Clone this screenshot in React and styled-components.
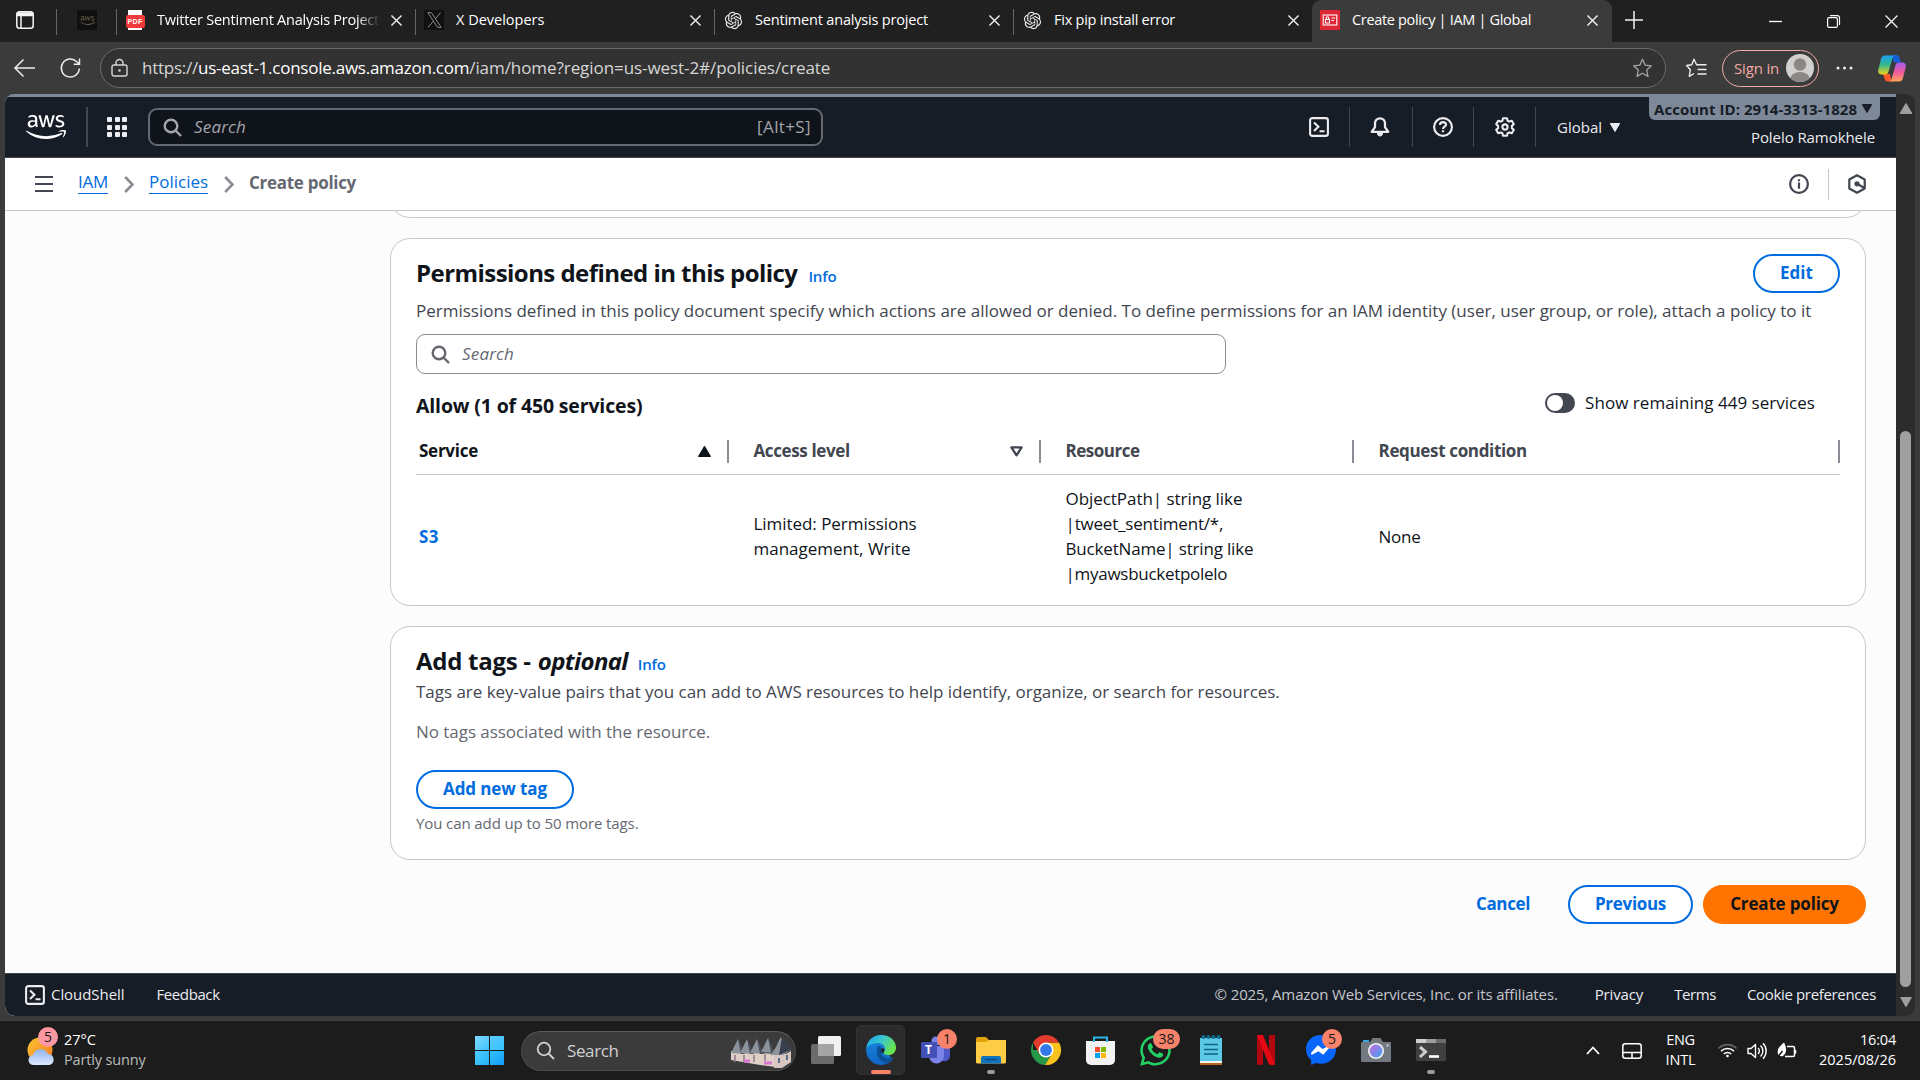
import React from 'react';
import styled, { createGlobalStyle, css } from 'styled-components';
import { FaAws, FaWhatsapp } from 'react-icons/fa';
import { RiOpenaiFill } from 'react-icons/ri';

const Global = createGlobalStyle`
  * { box-sizing: border-box; }
  html, body { margin: 0; padding: 0; }
  body { font-family: "Open Sans", "Noto Sans", sans-serif; overflow: hidden; background: #3b3b3b; }
  svg { display: block; flex: none; overflow: visible; }
`;

const Screen = styled.div`
  width: 1920px;
  height: 1080px;
  display: flex;
  flex-direction: column;
  background: #3b3b3b;
  overflow: hidden;
`;

const Txt = styled.span`
  white-space: nowrap;
  letter-spacing: ${(p) => p.$ls || 0}px;
`;

/* ---------- browser tab strip ---------- */
const TabStrip = styled.div`
  height: 42px;
  flex: none;
  display: flex;
  align-items: stretch;
  background: #202020;
`;
const StripSlot = styled.div`
  width: ${(p) => p.$w}px;
  display: flex;
  align-items: center;
  justify-content: center;
  padding-bottom: 2px;
`;
const PinnedSlot = styled(StripSlot)`
  justify-content: flex-end;
  padding-right: 9px;
  & > div { margin-right: 0; }
`;
const StripRule = styled.div`
  width: 1px;
  height: 26px;
  margin-top: 9px;
  background: #666;
`;
const Tab = styled.div`
  width: ${(p) => p.$w || 298}px;
  display: flex;
  align-items: center;
  padding: 0 13px 2px 8px;
  color: #fff;
  font-size: 14.5px;
  ${(p) =>
    p.$active &&
    css`
      width: 300px;
      background: #3b3b3b;
      border-radius: 9px 9px 0 0;
      padding-right: 14px;
    `}
`;
const Favicon = styled.div`
  width: 20px;
  height: 20px;
  margin-right: 12px;
  display: flex;
  align-items: center;
  justify-content: center;
  background: ${(p) => p.$bg || 'transparent'};
  color: ${(p) => p.$fg || '#fff'};
`;
const TabTitle = styled(Txt)`
  width: 223px;
  flex: none;
  overflow: hidden;
  line-height: 22px;
  ${(p) => p.$fade && css`
    -webkit-mask-image: linear-gradient(90deg, #000 200px, transparent 223px);
    mask-image: linear-gradient(90deg, #000 200px, transparent 223px);
  `}
`;
const TabClose = styled.div`
  margin-left: auto;
  padding-top: 1px;
`;
const WinControls = styled.div`
  margin-left: auto;
  display: flex;
`;
const WinBtn = styled(StripSlot)`
  width: 58px;
  padding: 1px 0 0;
`;

/* ---------- browser toolbar ---------- */
const Toolbar = styled.div`
  height: 52px;
  flex: none;
  display: flex;
  align-items: center;
  padding: 0 14px 0 14px;
  color: #eee;
`;
const Address = styled.div`
  width: 1567px;
  height: 40px;
  margin-left: 19px;
  display: flex;
  align-items: center;
  padding: 0 12px 0 10px;
  border: 1px solid #6b6b6b;
  border-radius: 20px;
  background: #323232;
  font-size: 17px;
  color: #d6d6d6;
`;
const Url = styled.div`
  flex: 1;
  display: flex;
  margin-left: 14px;
  line-height: 24px;
`;
const Host = styled(Txt)`
  color: #fff;
`;
const SignIn = styled.div`
  width: 97px;
  height: 37px;
  margin-left: 15px;
  display: flex;
  align-items: center;
  justify-content: space-between;
  padding: 0 4px 0 11px;
  border: 1.5px solid #f4aaa6;
  border-radius: 19px;
  color: #f4aaa6;
  font-size: 15px;
`;
const ToolIcon = styled.div`
  margin-left: ${(p) => p.$ml || 0}px;
`;

/* ---------- page frame ---------- */
const Viewport = styled.div`
  height: 922px;
  flex: none;
  display: flex;
  padding: 0 5px;
`;
const Page = styled.div`
  width: 1891px;
  display: flex;
  flex-direction: column;
  background: #fcfcfd;
  border-radius: 9px 0 0 10px;
  overflow: hidden;
`;
const Scrollbar = styled.div`
  width: 19px;
  display: flex;
  flex-direction: column;
  align-items: center;
  background: #2c2c2c;
  border-radius: 0 9px 9px 0;
  padding: 9px 0 9px;
`;
const Thumb = styled.div`
  width: 11px;
  height: 556px;
  margin: 317px 0 auto;
  border-radius: 6px;
  background: #9f9f9f;
`;

/* ---------- AWS navigation ---------- */
const AwsNav = styled.header`
  height: 64px;
  flex: none;
  display: flex;
  align-items: center;
  background: #161d26;
  border-top: 3px solid #7d8998;
  border-bottom: 1px solid #424650;
  color: #ebebf0;
`;
const LogoSlot = styled.div`
  width: 83px;
  height: 40px;
  display: flex;
  align-items: center;
  padding: 0 0 1px 21px;
  color: #fff;
  border-right: 2px solid #424650;
`;
const GridIcon = styled.div`
  width: 20px;
  height: 20px;
  margin: 0 21px 0 19px;
  display: grid;
  grid-template-columns: repeat(3, 5px);
  gap: 2.5px;
  & > i { height: 5px; border-radius: 1px; background: #ebebf0; }
`;
const NavSearch = styled.div`
  width: 675px;
  height: 38px;
  display: flex;
  align-items: center;
  border: 2px solid #656871;
  border-radius: 9px;
  background: #0f141a;
  padding: 0 10px 0 13px;
  color: #a4a4ad;
  font-size: 17px;
`;
const Hint = styled(Txt)`
  flex: 1;
  margin-left: 12px;
  padding-bottom: 2px;
  font-style: italic;
`;
const Shortcut = styled(Txt)`
  padding-bottom: 1px;
`;
const NavTools = styled.div`
  margin-left: auto;
  height: 40px;
  display: flex;
`;
const NavTool = styled.div`
  width: ${(p) => p.$w}px;
  display: flex;
  align-items: center;
  justify-content: center;
  padding-right: ${(p) => p.$pr || 0}px;
  border-right: 1px solid #424650;
`;
const Region = styled.div`
  width: 113px;
  display: flex;
  align-items: center;
  gap: 8px;
  padding: 0 0 0 21px;
  font-size: 15px;
`;
const Account = styled.div`
  width: 247px;
  height: 60px;
  align-self: flex-start;
  padding-right: 16px;
  display: flex;
  flex-direction: column;
`;
const AccountTag = styled.div`
  height: 23px;
  flex: none;
  display: flex;
  align-items: center;
  gap: 5px;
  padding: 0 5px 0 5px;
  border-radius: 0 0 6px 6px;
  background: #7d8998;
  color: #161d26;
  font-size: 15px;
  font-weight: 700;
`;
const UserName = styled.div`
  padding: 6px 5px 0 0;
  text-align: right;
  font-size: 15px;
  line-height: 22px;
`;

/* ---------- breadcrumb ---------- */
const Crumbs = styled.nav`
  height: 53px;
  flex: none;
  display: flex;
  align-items: center;
  padding: 0 30px;
  background: #fff;
  border-bottom: 1px solid #c6c6cd;
  font-size: 17px;
`;
const Burger = styled.div`
  width: 18px;
  height: 16px;
  margin-right: 25px;
  border: solid #424650;
  border-width: 2.5px 0;
  display: flex;
  flex-direction: column;
  justify-content: center;
  &::before { content: ''; height: 2.5px; background: #424650; }
`;
const Crumb = styled(Txt)`
  width: ${(p) => p.$w}px;
  line-height: 20px;
  padding-bottom: 1px;
  margin-bottom: 2px;
  border-bottom: 1px solid #006ce0;
  color: #006ce0;
`;
const Current = styled(Txt)`
  color: #656871;
  font-weight: 700;
  line-height: 22px;
  margin-bottom: 2px;
`;
const CrumbArrow = styled.div`
  margin: 0 15px 0 16px;
`;
const CrumbTools = styled.div`
  margin-left: auto;
  height: 32px;
  display: flex;
  align-items: center;
`;
const VRule = styled.div`
  width: 1px;
  height: 31px;
  margin: 0 19px;
  background: #c6c6cd;
`;

/* ---------- content ---------- */
const Content = styled.main`
  flex: 1;
  min-height: 0;
  display: flex;
  flex-direction: column;
  gap: 20px;
  padding: 0 30px 0 385px;
  overflow: hidden;
`;
const Card = styled.section`
  height: ${(p) => p.$h}px;
  flex: none;
  margin-top: ${(p) => p.$mt || 0}px;
  padding: 15px 25px 0;
  border: 1px solid #c6c6cd;
  border-radius: 20px;
  background: #fff;
`;
const CardHead = styled.div`
  display: flex;
  align-items: center;
  justify-content: space-between;
`;
const Title = styled.h2`
  margin: 0;
  height: 38px;
  display: flex;
  align-items: baseline;
  line-height: ${(p) => p.$lh || 38}px;
  font-size: 24px;
  font-weight: 700;
  color: #0f141a;
`;
const InfoLink = styled(Txt)`
  margin-left: ${(p) => p.$ml || 11}px;
  font-size: 15px;
  font-weight: 600;
  color: #006ce0;
`;
const Desc = styled.p`
  margin: ${(p) => p.$m || 0};
  font-size: 17px;
  line-height: 25px;
  color: ${(p) => p.$c || '#424650'};
`;
const Button = styled.button`
  width: ${(p) => p.$w}px;
  height: 39px;
  padding: 0 0 3px;
  border: 2px solid #006ce0;
  border-radius: 20px;
  background: #fff;
  color: #006ce0;
  font: 700 17px "Open Sans", "Noto Sans", sans-serif;
  ${(p) => p.$primary && css`
    background: #ff7300;
    border-color: #ff7300;
    color: #0f141a;
  `}
`;
const SearchBox = styled.div`
  width: 810px;
  height: 40px;
  margin-top: 10px;
  display: flex;
  align-items: center;
  padding: 0 14px;
  border: 1px solid #8c8c94;
  border-radius: 9px;
  font-size: 17px;
  color: #656871;
`;
const ListHead = styled.div`
  height: 54px;
  display: flex;
  align-items: center;
  justify-content: space-between;
  padding: 5px 25px 0 0;
  font-size: 17px;
  color: #0f141a;
`;
const Allow = styled(Txt)`
  font-size: 19.5px;
  font-weight: 700;
  padding-top: 4px;
`;
const ToggleRow = styled.label`
  display: flex;
  align-items: center;
  gap: 10px;
  margin-bottom: 1px;
`;
const ToggleText = styled(Txt)`
  padding-bottom: 2px;
`;
const Toggle = styled.div`
  width: 30px;
  height: 20px;
  padding: 2px;
  border-radius: 10px;
  background: #424650;
  &::before { content: ''; display: block; width: 16px; height: 16px; border-radius: 50%; background: #fff; }
`;
const Grid = styled.div`
  display: grid;
  grid-template-columns: 313px 312px 313px 486px;
  align-items: center;
`;
const HeadRow = styled(Grid)`
  height: 47px;
  border-bottom: 1px solid #c6c6cd;
`;
const Th = styled.div`
  height: 23px;
  display: flex;
  align-items: center;
  justify-content: space-between;
  padding: 0 16px 0 ${(p) => (p.$first ? 3 : 24.5)}px;
  border-right: 2px solid #8c8c94;
  color: ${(p) => (p.$first ? '#0f141a' : '#424650')};
  font-size: 17px;
  font-weight: 700;
  & > span { margin-bottom: 2px; }
`;
const BodyRow = styled(Grid)`
  height: 122px;
`;
const Td = styled.div`
  display: flex;
  flex-direction: column;
  padding-left: ${(p) => (p.$first ? 3 : 24.5)}px;
  font-size: 17px;
  line-height: 25px;
  color: #0f141a;
`;
const ServiceLink = styled(Txt)`
  color: #006ce0;
  font-weight: 700;
`;
const Note = styled.p`
  margin: 3px 0 0;
  font-size: 15px;
  line-height: 22px;
  color: #656871;
`;
const Actions = styled.div`
  margin-top: 5px;
  display: flex;
  align-items: center;
  justify-content: flex-end;
  gap: 10px;
`;
const Cancel = styled(Txt)`
  margin-right: 28px;
  padding-bottom: 3px;
  font-size: 17px;
  font-weight: 700;
  color: #006ce0;
`;
const Footer = styled.footer`
  height: 43px;
  flex: none;
  display: flex;
  align-items: center;
  padding: 0 20px;
  background: #161d26;
  border-top: 1px solid #424650;
  color: #ebebf0;
  font-size: 15px;
`;
const FootItem = styled(Txt)`
  margin-left: ${(p) => p.$ml || 31}px;
  padding-bottom: 2px;
`;
const Copyright = styled(Txt)`
  margin-left: auto;
  margin-right: 6px;
  padding-bottom: 2px;
  color: #c6c6cd;
`;

/* ---------- taskbar ---------- */
const Taskbar = styled.div`
  height: 60px;
  flex: none;
  margin-top: 4px;
  display: flex;
  align-items: center;
  background: #1c1c1c;
  border-top: 1px solid #404040;
  color: #fff;
  font-size: 14.5px;
`;
const Weather = styled.div`
  width: 462px;
  padding-left: 27px;
  display: flex;
  align-items: center;
`;
const TwoLine = styled.div`
  display: flex;
  flex-direction: column;
  margin-bottom: 2px;
  line-height: 20px;
  text-align: ${(p) => p.$align || 'left'};
`;
const Muted = styled(Txt)`
  color: #bdbdbd;
`;
const IconWrap = styled.div`
  position: relative;
  display: flex;
  align-items: center;
  justify-content: center;
`;
const WeatherIcon = styled(IconWrap)`
  width: 28px;
  height: 30px;
  margin-right: 9px;
`;
const Badge = styled.span`
  position: absolute;
  right: ${(p) => p.$r ?? -6}px;
  top: ${(p) => p.$t ?? -6}px;
  min-width: 20px;
  width: ${(p) => p.$w || 20}px;
  height: 20px;
  border-radius: 10px;
  background: ${(p) => p.$bg || '#f7826a'};
  color: #1a1a1a;
  font-size: 14px;
  line-height: 20px;
  text-align: center;
`;
const StartBtn = styled.div`
  width: 29px;
  height: 29px;
  margin: 0 17px 0 13px;
  display: grid;
  grid-template-columns: 1fr 1fr;
  gap: 1px;
  & > i { background: linear-gradient(135deg, #7fdcff, #3fc0f8); }
  & > i:nth-child(2) { background: linear-gradient(135deg, #5ccbff, #35c0fb); }
  & > i:nth-child(3) { background: linear-gradient(135deg, #4fcafd, #24b4fb); }
  & > i:nth-child(4) { background: linear-gradient(135deg, #35c0fb, #109cf5); }
`;
const TaskSearch = styled.div`
  width: 275px;
  height: 40px;
  margin-right: 2px;
  display: flex;
  align-items: center;
  padding: 0 3px 0 14px;
  border: 1px solid #4a4a4a;
  border-top-color: #5c5c5c;
  border-radius: 20px;
  background: #3b3b3b;
  color: #d0d0d0;
  font-size: 17px;
`;
const TaskHint = styled(Txt)`
  flex: 1;
  margin-left: 12px;
`;
const TaskSlot = styled.div`
  width: 55px;
  height: 59px;
  padding: 4px 3px;
  display: flex;
`;
const TaskTile = styled.div`
  position: relative;
  width: 49px;
  height: 50px;
  display: flex;
  align-items: center;
  justify-content: center;
  border-radius: 5px;
  border: 1px solid transparent;
  ${(p) => p.$active && css`
    background: #2b2b2b;
    border-color: #333;
  `}
`;
const Indicator = styled.i`
  position: absolute;
  bottom: 0;
  width: ${(p) => (p.$on ? 20 : 8)}px;
  height: 4px;
  border-radius: 2px;
  background: ${(p) => (p.$on ? '#f7826a' : '#9a9a9a')};
`;
const Tray = styled.div`
  margin-left: auto;
  padding-right: 24px;
  display: flex;
  align-items: center;
`;
const TrayItem = styled.div`
  width: ${(p) => p.$w}px;
  display: flex;
  justify-content: center;
`;

/* ---------- icons ---------- */
const Cross = ({ s = 11, w = 1.5 }) => (
  <svg width={s} height={s} viewBox="0 0 12 12" fill="none" stroke="#f2f2f2" strokeWidth={w}>
    <path d="M0.5 0.5l11 11M11.5 0.5l-11 11" />
  </svg>
);
const Magnifier = ({ s = 19, w = 2.4 }) => (
  <svg width={s} height={s} viewBox="0 0 19 19" fill="none" stroke="currentColor" strokeWidth={w}>
    <circle cx="8" cy="8" r="6.3" />
    <path d="M12.5 12.5l5.5 5.5" />
  </svg>
);
const ShellIcon = () => (
  <svg width="20" height="20" viewBox="0 0 20 20" fill="none" stroke="currentColor" strokeWidth="2.1">
    <rect x="1.1" y="1.1" width="17.8" height="17.8" rx="2.2" />
    <path d="M5 5.6l4.4 4.2L5 14M10.5 14.2h5" />
  </svg>
);
const BellIcon = () => (
  <svg width="20" height="20" viewBox="0 0 20 20" fill="none" stroke="currentColor" strokeWidth="2.3" strokeLinejoin="round">
    <path d="M10 1.3c-3 0-5 2.3-5 5v3.9L1.7 14.8h16.6L15 10.2V6.3c0-2.7-2-5-5-5z" />
    <path d="M7.4 15.5h5.2c0 2.6-1 3.500-2.600 3.500s-2.600-.9-2.600-3.500z" fill="currentColor" strokeWidth="1" />
  </svg>
);
const HelpIcon = () => (
  <svg width="20" height="20" viewBox="0 0 20 20" fill="none" stroke="currentColor" strokeWidth="2.2">
    <circle cx="10" cy="10" r="8.9" />
    <path d="M7 8c0-1.800 1.300-2.900 3-2.900s3 1 3 2.600c0 2-3 2.100-3 4.300" />
    <path d="M10 13.300v2" />
  </svg>
);
const GearIcon = () => (
  <svg width="20" height="20" viewBox="0 0 20 20" fill="none" stroke="currentColor" strokeWidth="2.1" strokeLinejoin="round">
    <path d="M8 1.200h4l.6 2.500 1.700.9 2.500-.8 2 3.400-1.900 1.700v2.200l1.900 1.700-2 3.400-2.500-.8-1.700.9-.6 2.500H8l-.6-2.500-1.700-.9-2.500.8-2-3.400 1.900-1.700V8.900L1.200 7.200l2-3.400 2.500.8 1.700-.9z" />
    <circle cx="10" cy="10" r="2.6" />
  </svg>
);
const Caret = ({ up, w = 10, h = 9, c = 'currentColor' }) => (
  <svg width={w} height={h} viewBox="0 0 10 9">
    <path d={up ? 'M5 0.5L9.7 8.5H0.3z' : 'M5 8.5L9.7 0.5H0.3z'} fill={c} stroke={c} strokeLinejoin="round" />
  </svg>
);
const SortOutline = () => (
  <svg width="13" height="11" viewBox="0 0 13 11" fill="none" stroke="#424650" strokeWidth="2.3" strokeLinejoin="round">
    <path d="M1.4 1.4h10.2L6.5 9.4z" />
  </svg>
);
const Chevron = () => (
  <svg width="10" height="17" viewBox="0 0 10 17" fill="none" stroke="#8c8c94" strokeWidth="2.6">
    <path d="M1.2 1l7.2 7.5L1.2 16" />
  </svg>
);
const StarPath = 'M10 1.2l2.6 5.9 6.300.7-4.700 4.300 1.300 6.300L10 15.200l-5.500 3.200 1.300-6.300L1.100 7.800l6.300-.7z';

const WorkspacesIcon = () => (
  <svg width="18" height="18" viewBox="0 0 18 18" fill="none" stroke="#f5f5f5" strokeWidth="1.5">
    <rect x="0.8" y="0.8" width="16.4" height="16.4" rx="2.8" />
    <path d="M1.500 2h15v2.500h-15z" fill="#f5f5f5" />
    <path d="M5 5v12" />
  </svg>
);
const PdfText = styled.b`
  font: 700 7px "Liberation Sans", sans-serif;
  letter-spacing: 0.4px;
  color: #fff;
`;
const PdfSheet = styled.div`
  width: 19px;
  height: 20px;
  display: flex;
  flex-direction: column;
  align-items: center;
  background: linear-gradient(#fff, #fff) center / 14px 20px no-repeat;
`;
const PdfBand = styled.div`
  width: 19px;
  height: 13px;
  margin-top: 5px;
  display: flex;
  align-items: center;
  justify-content: center;
  border-radius: 2px;
  background: #f0393b;
`;
const PdfIcon = () => (
  <PdfSheet><PdfBand><PdfText>PDF</PdfText></PdfBand></PdfSheet>
);
const XIcon = () => (
  <svg width="15" height="16" viewBox="0 0 15 16" fill="none" stroke="#8a8a8a" strokeWidth="1">
    <path d="M0.8 0.6h3.6l9.8 14.8h-3.600zM13.600 0.600L8.200 7M6.500 9L1 15.400" />
  </svg>
);
const IamIcon = () => (
  <svg width="20" height="20" viewBox="0 0 20 20" fill="none" stroke="#fff" strokeWidth="1.1">
    <rect width="20" height="20" fill="#dd2735" stroke="none" />
    <rect x="3.2" y="5" width="13.6" height="10" />
    <path d="M5.500 9.500h4V13h-4zM6.300 9.500V8a1.200 1.200 0 0 1 2.400 0v1.500M11.500 8h3.500M11.500 10.500h2.500" />
  </svg>
);
const AvatarIcon = () => (
  <svg width="28" height="28" viewBox="0 0 28 28">
    <defs><clipPath id="avatarClip"><circle cx="14" cy="14" r="14" /></clipPath></defs>
    <g clipPath="url(#avatarClip)">
      <rect width="28" height="28" fill="#d2d0ce" />
      <circle cx="14" cy="10.5" r="6.2" fill="#8a8886" />
      <ellipse cx="14" cy="26" rx="10" ry="8" fill="#8a8886" />
    </g>
  </svg>
);
const CopilotIcon = () => (
  <svg width="28" height="27" viewBox="0 0 28 27">
    <defs>
      <linearGradient id="copA" x1="0" y1="0" x2="0" y2="1"><stop offset="0" stopColor="#1aa0f0" /><stop offset=".5" stopColor="#35b98a" /><stop offset="1" stopColor="#f5d21c" /></linearGradient>
      <linearGradient id="copB" x1="0" y1="0" x2="0" y2="1"><stop offset="0" stopColor="#a35df2" /><stop offset=".5" stopColor="#ee5a9b" /><stop offset="1" stopColor="#ffa45c" /></linearGradient>
    </defs>
    <path d="M14 0h4c2 0 3 1 3.500 3l1.300 4.500h-7z" fill="#1560d8" />
    <path d="M13.500 26.500H10c-2 0-3-1-3.500-3L5 19h7z" fill="#ff5a2c" />
    <path d="M6.500 0.500H17c-1.500 0-2.300 1.500-2.800 3.500l-3.600 12.500c-.6 2-1.600 3-3.600 3H3.500C0.500 19.500-.3 17 .4 14.300L3 4C3.600 1.800 4.500.5 6.500.5z" fill="url(#copA)" />
    <path d="M21.500 26.500H11c1.500 0 2.300-1.500 2.800-3.500l3.600-12.500c.6-2 1.600-3 3.600-3h3.500c3 0 3.800 2.500 3.100 5.200L25 23c-.6 2.200-1.500 3.500-3.500 3.500z" fill="url(#copB)" />
  </svg>
);
const InfoIcon = () => (
  <svg width="20" height="20" viewBox="0 0 20 20" fill="none" stroke="#424650" strokeWidth="2.2">
    <circle cx="10" cy="10" r="8.9" />
    <path d="M10 8.500v6.200M10 5.200v2.100" />
  </svg>
);
const HexIcon = () => (
  <svg width="18" height="20" viewBox="0 0 18 20" fill="none" stroke="#424650" strokeWidth="2.2" strokeLinejoin="round">
    <path d="M9 1.200l7.700 4.300v9L9 18.800l-7.700-4.300v-9z" />
    <circle cx="9" cy="9.8" r="2.6" fill="#424650" stroke="none" />
    <path d="M9.500 10l6.500 3.800" />
  </svg>
);
const SunCloud = () => (
  <svg width="28" height="30" viewBox="0 0 28 30">
    <defs>
      <linearGradient id="sun" x1="0" y1="0" x2="1" y2="1"><stop offset="0" stopColor="#fcc733" /><stop offset="1" stopColor="#f0781e" /></linearGradient>
      <linearGradient id="cloud" x1="0" y1="0" x2="0" y2="1"><stop offset="0" stopColor="#8fb4f0" /><stop offset="1" stopColor="#dce9fb" /></linearGradient>
    </defs>
    <circle cx="13" cy="14" r="12.5" fill="url(#sun)" />
    <path d="M7 29a5 5 0 0 1-1-10 8 8 0 0 1 15-1 5.600 5.600 0 0 1 1.500 11z" fill="url(#cloud)" />
  </svg>
);
const VillageIcon = () => (
  <svg width="62" height="34" viewBox="0 0 62 34">
    <path d="M1 17L46 20V33L30 31 1 26z" fill="#e0cfc6" />
    <path d="M44 20h12l5-3v11l-9 6H44z" fill="#d8c6c0" />
    {[[5, 14], [14, 14], [24, 14], [35, 13]].map(([x, y]) => (
      <g key={x}>
        <path d={`M${x - 4} ${y + 5}L${x + 3} ${y - 9}L${x + 9} ${y + 6}z`} fill="#8b939a" />
        <path d={`M${x + 3} ${y - 9}L${x + 10} ${y + 6}h-4z`} fill="#4a4f5e" />
        <path d={`M${x} ${y + 7}v7`} stroke="#8b7a8c" strokeWidth="1.5" />
      </g>
    ))}
    <path d="M40 21C47 14 48 7 51 3c1 5 9 8 10 13l-8 5z" fill="#8d939b" />
    <path d="M52 3c3 5 8 8 9 13l-12 5z" fill="#3a3f4f" />
    <path d="M14 27h6M34 29h8" stroke="#d973d4" strokeWidth="3" />
    <path d="M57 21v5M49 24v5" stroke="#586f88" strokeWidth="2" />
  </svg>
);
const TaskViewIcon = () => (
  <svg width="30" height="28" viewBox="0 0 30 28">
    <rect x="7" y="0" width="23" height="20" rx="1.5" fill="#f0f0f0" />
    <rect x="0" y="8" width="23" height="20" rx="1.5" fill="#6b6b6b" />
    <path d="M7 8h16v12H7z" fill="#a4a4a4" />
  </svg>
);
const EdgeIcon = () => (
  <svg width="30" height="30" viewBox="0 0 30 30">
    <defs>
      <linearGradient id="edgeTop" x1="0" y1="0" x2="1" y2=".5"><stop offset="0" stopColor="#1fa5ea" /><stop offset=".5" stopColor="#37c6d0" /><stop offset="1" stopColor="#69e34f" /></linearGradient>
      <linearGradient id="edgeLeft" x1="0" y1="0" x2="0" y2="1"><stop offset="0" stopColor="#1a8de0" /><stop offset="1" stopColor="#0f63c4" /></linearGradient>
    </defs>
    <path d="M15 0a15 15 0 1 0 11 25.200c1.500-1.500-6-8-6-8L24 12z" fill="url(#edgeLeft)" />
    <path d="M0.500 13C1.500 5 8 0 15.500 0 24 0 30 6 30 12.500c0 5-3.500 7.500-7.500 7.500-3.300 0-5-1-5-2s1.500-1.500 1.500-4c0-3.500-3-6-7-6C6.500 8 2 10.500.5 13z" fill="url(#edgeTop)" />
    <path d="M12 11c-3 5-1 15 9 17.500 3-1.300 5.500-3.500 7-6.500-6 3-13 .5-13-5 0-1.500.5-2.500 1.500-3.500-1.500-2-3.500-2.500-4.500-2.500z" fill="#0d4f94" />
    <path d="M15 14.500c.5-1 1.500-1.500 2.500-1.200.8.400 1.300 1.500 1 2.500-.3.800-1.200 1.500-1 2.500-2 .3-3.400-1.800-2.500-3.800z" fill="#202830" />
  </svg>
);
const TeamsT = styled.span`
  position: absolute;
  left: 0;
  top: 7px;
  width: 16px;
  height: 16px;
  border-radius: 1px;
  background: #4350b5;
  color: #fff;
  font: 700 12px/16px "Open Sans", sans-serif;
  text-align: center;
`;
const TeamsIcon = () => (
  <IconWrap>
    <svg width="30" height="30" viewBox="0 0 30 30">
      <circle cx="15" cy="6" r="4.5" fill="#7b83eb" />
      <path d="M20 12h9v9a5.500 5.500 0 0 1-9 4z" fill="#5059c9" />
      <path d="M8 11h15v10a7.500 7.500 0 0 1-15 0z" fill="#7b83eb" />
    </svg>
    <TeamsT>T</TeamsT>
  </IconWrap>
);
const FolderIcon = () => (
  <svg width="30" height="28" viewBox="0 0 30 28">
    <path d="M0 3a2 2 0 0 1 2-2h8l3 3h15a2 2 0 0 1 2 2v6H0z" fill="#e0a30b" />
    <path d="M0 6h10l3-2h17v22a1.500 1.500 0 0 1-1.500 1.500h-27A1.500 1.500 0 0 1 0 26z" fill="#fdcd45" />
    <path d="M5 27.500V22a2 2 0 0 1 2-2h16a2 2 0 0 1 2 2v5.500z" fill="#1273bf" />
    <path d="M9 23.500h12" stroke="#0b4b83" strokeWidth="1.3" />
  </svg>
);
const ChromeIcon = () => (
  <svg width="30" height="30" viewBox="0 0 30 30">
    <path d="M15 15H2V7.500A15 15 0 0 0 14 30l7.500-12z" fill="#279847" />
    <path d="M15 7.500h13A15 15 0 0 1 14 30l7.500-12z" fill="#fcc31e" />
    <path d="M15 7.500H28A15 15 0 0 0 2 7.500L8.500 19z" fill="#e33b2e" />
    <circle cx="15" cy="15" r="7.5" fill="#fff" />
    <circle cx="15" cy="15" r="5.9" fill="#3379ea" />
  </svg>
);
const StoreIcon = () => (
  <svg width="29" height="29" viewBox="0 0 29 29">
    <path d="M8 8V1.500h13V8" fill="none" stroke="#2db6ea" strokeWidth="2" />
    <path d="M0 5h29v19a5 5 0 0 1-5 5H5a5 5 0 0 1-5-5z" fill="#f2f2f2" />
    <path d="M9 11h5v5H9z" fill="#f04f27" /><path d="M15 11h5v5h-5z" fill="#7fb900" />
    <path d="M9 17h5v5H9z" fill="#04a2ee" /><path d="M15 17h5v5h-5z" fill="#fdb813" />
    <path d="M8 6V3M21 6V3" stroke="#2db6ea" strokeWidth="2" />
  </svg>
);
const NotepadIcon = () => (
  <svg width="22" height="30" viewBox="0 0 22 30">
    <path d="M0 3h22v24H0z" fill="#5cc8e6" />
    <path d="M0 26h22v2H0z" fill="#f5f5f5" /><path d="M0 28h22v2H0z" fill="#b5651d" />
    <path d="M4 9.500h14M4 14.500h14M4 19h14" stroke="#0f6484" strokeWidth="1.6" />
    {[3, 8, 13, 18].map((x) => <circle key={x} cx={x + 0.5} cy="2" r="2" fill="#0f6d8f" />)}
  </svg>
);
const NetflixIcon = () => (
  <svg width="18" height="30" viewBox="0 0 18 30">
    <path d="M0 0h6v29.500L0 30zM12 0h6v30l-6-.5z" fill="#b00710" />
    <path d="M0 0h6l12 30-6-.6z" fill="#e50914" />
  </svg>
);
const MessengerIcon = () => (
  <svg width="30" height="30" viewBox="0 0 30 30">
    <path d="M15 0C6.500 0 0 6 0 14.300c0 4.300 1.800 8 5 10.500l.3 5.200 4.500-2c1.600.5 3.400.8 5.200.8 8.500 0 15-6.200 15-14.500S23.500 0 15 0z" fill="#0866ff" />
    <path d="M6 18.500L12 11.500l4.500 3.800 6-3.300-5.500 6.500-4.500-3.500z" fill="#fff" stroke="#fff" strokeWidth="2" strokeLinejoin="round" />
  </svg>
);
const CameraIcon = () => (
  <svg width="30" height="24" viewBox="0 0 30 24">
    <defs><linearGradient id="lens" x1="0" y1="0" x2="1" y2="1"><stop offset="0" stopColor="#c66ddd" /><stop offset="1" stopColor="#3aa3f2" /></linearGradient></defs>
    <path d="M2 2h6v4H2z" fill="#38a7dd" />
    <path d="M1 4h8l2.500-4h8L22 4h7a1 1 0 0 1 1 1v18a1 1 0 0 1-1 1H1a1 1 0 0 1-1-1V5a1 1 0 0 1 1-1z" fill="#727980" />
    <circle cx="15" cy="13" r="8" fill="#f2f2f2" />
    <circle cx="15" cy="13" r="6.4" fill="url(#lens)" />
    <circle cx="26.5" cy="7.5" r="1.3" fill="#c0c6ca" />
  </svg>
);
const TerminalIcon = () => (
  <svg width="30" height="22" viewBox="0 0 30 22">
    <rect width="30" height="22" rx="1.5" fill="#404040" />
    <path d="M0 0h10v4H0z" fill="#cfcfcf" /><path d="M10 0h10v4H10z" fill="#9d9d9d" /><path d="M20 0h10v4H20z" fill="#6b6b6b" />
    <path d="M4 8l5.500 4.800L4 18" fill="none" stroke="#cfcfcf" strokeWidth="3" />
    <path d="M13 17.500h10" stroke="#fff" strokeWidth="2.6" />
  </svg>
);

const tabs = [
  { title: 'Twitter Sentiment Analysis Project', ls: -0.23, icon: <PdfIcon />, fade: true },
  { title: 'X Developers', ls: 0, icon: <XIcon />, bg: '#101010' },
  { title: 'Sentiment analysis project', ls: -0.19, icon: <RiOpenaiFill size={21} />, fg: '#e6e6e6' },
  { title: 'Fix pip install error', ls: -0.24, icon: <RiOpenaiFill size={21} />, fg: '#e6e6e6' },
];

const taskItems = [
  { k: 'view', icon: <TaskViewIcon /> },
  { k: 'edge', icon: <EdgeIcon />, active: true },
  { k: 'teams', icon: <TeamsIcon />, badge: '1' },
  { k: 'files', icon: <FolderIcon />, running: true },
  { k: 'chrome', icon: <ChromeIcon /> },
  { k: 'store', icon: <StoreIcon /> },
  { k: 'whatsapp', icon: <FaWhatsapp size={35} color="#24cf64" />, badge: '38' },
  { k: 'notes', icon: <NotepadIcon /> },
  { k: 'netflix', icon: <NetflixIcon /> },
  { k: 'messenger', icon: <MessengerIcon />, badge: '5' },
  { k: 'camera', icon: <CameraIcon /> },
  { k: 'terminal', icon: <TerminalIcon />, running: true },
];

function BrowserChrome() {
  return (
    <>
      <TabStrip>
        <StripSlot $w={56}><ToolIcon $ml={-6}><WorkspacesIcon /></ToolIcon></StripSlot>
        <StripRule />
        <PinnedSlot $w={49}><Favicon $bg="#101010" $fg="#6a5a48"><FaAws size={15} /></Favicon></PinnedSlot>
        <StripSlot $w={10} />
        {tabs.map((t) => (
          <React.Fragment key={t.title}>
            <StripRule />
            <Tab>
              <Favicon $bg={t.bg} $fg={t.fg}>{t.icon}</Favicon>
              <TabTitle $ls={t.ls} $fade={t.fade}>{t.title}</TabTitle>
              <TabClose><Cross /></TabClose>
            </Tab>
          </React.Fragment>
        ))}
        <Tab $active>
          <Favicon><IamIcon /></Favicon>
          <TabTitle $ls={-0.33}>Create policy | IAM | Global</TabTitle>
          <TabClose><Cross /></TabClose>
        </Tab>
        <StripSlot $w={43}>
          <svg width="18" height="18" viewBox="0 0 18 18" stroke="#f2f2f2" strokeWidth="1.5"><path d="M9 0v18M0 9h18" /></svg>
        </StripSlot>
        <WinControls>
          <WinBtn><svg width="13" height="13" viewBox="0 0 13 13" stroke="#fff" strokeWidth="1.3"><path d="M0 6.500h13" /></svg></WinBtn>
          <WinBtn>
            <svg width="13" height="13" viewBox="0 0 13 13" fill="none" stroke="#fff" strokeWidth="1.2">
              <rect x="0.6" y="2.6" width="9.8" height="9.8" rx="1.5" /><path d="M3 .6h7.500a2 2 0 0 1 2 2V10" />
            </svg>
          </WinBtn>
          <WinBtn><Cross s={13} w={1.2} /></WinBtn>
        </WinControls>
      </TabStrip>
      <Toolbar>
        <svg width="21" height="18" viewBox="0 0 21 18" fill="none" stroke="#eee" strokeWidth="1.5"><path d="M21 9H1.200M9.500 .5L1 9l8.500 8.500" /></svg>
        <ToolIcon $ml={25}>
          <svg width="21" height="20" viewBox="0 0 21 20" fill="none" stroke="#eee" strokeWidth="1.5">
            <path d="M19.300 10.500a9 9 0 1 1-2.500-6.700L19.500 6M19.500 .5V6.300h-5.800" />
          </svg>
        </ToolIcon>
        <Address>
          <svg width="17" height="18" viewBox="0 0 17 18" fill="none" stroke="#d6d6d6" strokeWidth="1.4">
            <rect x="1" y="6" width="15" height="11" rx="2" /><path d="M5 6V4a3.500 3.500 0 0 1 7 0v2" /><circle cx="8.5" cy="11.5" r="0.6" fill="#d6d6d6" />
          </svg>
          <Url>
            <Txt $ls={-0.25}>https://</Txt>
            <Host $ls={-0.25}>us-east-1.console.aws.amazon.com</Host>
            <Txt $ls={-0.07}>/iam/home?region=us-west-2#/policies/create</Txt>
          </Url>
          <svg width="21" height="20" viewBox="0 0 20 20" fill="none" stroke="#a5a5a5" strokeWidth="1.3" strokeLinejoin="round"><path d={StarPath} /></svg>
        </Address>
        <ToolIcon $ml={20}>
          <svg width="21" height="20" viewBox="0 0 21 20" fill="none" stroke="#eee" strokeWidth="1.4" strokeLinejoin="round">
            <path d="M12.500 6.800H10.600L8 1.200 5.700 6.800l-5 .7 3.600 4.300-1 6.500L8 15.500M12.500 6.800h8M11.500 11.500h9M11.500 16h9" />
          </svg>
        </ToolIcon>
        <SignIn><Txt $ls={-0.18}>Sign in</Txt><AvatarIcon /></SignIn>
        <ToolIcon $ml={17}>
          <svg width="17" height="4" viewBox="0 0 17 4" fill="#eee"><circle cx="2" cy="2" r="1.5" /><circle cx="8.5" cy="2" r="1.5" /><circle cx="15" cy="2" r="1.5" /></svg>
        </ToolIcon>
        <ToolIcon $ml={25}><CopilotIcon /></ToolIcon>
      </Toolbar>
    </>
  );
}

function ConsoleHeader() {
  return (
    <>
      <AwsNav>
        <LogoSlot><FaAws size={40} /></LogoSlot>
        <GridIcon>{Array.from({ length: 9 }, (_, i) => <i key={i} />)}</GridIcon>
        <NavSearch><Magnifier /><Hint $ls={0.18}>Search</Hint><Shortcut $ls={0.38}>[Alt+S]</Shortcut></NavSearch>
        <NavTools>
          <NavTool $w={61}><ShellIcon /></NavTool>
          <NavTool $w={63} $pr={2}><BellIcon /></NavTool>
          <NavTool $w={61}><HelpIcon /></NavTool>
          <NavTool $w={62}><GearIcon /></NavTool>
          <Region><Txt>Global</Txt><Caret /></Region>
        </NavTools>
        <Account>
          <AccountTag><Txt $ls={0.04}>Account ID: 2914-3313-1828</Txt><Caret /></AccountTag>
          <UserName><Txt $ls={-0.07}>Polelo Ramokhele</Txt></UserName>
        </Account>
      </AwsNav>
      <Crumbs>
        <Burger />
        <Crumb $w={30} $ls={-0.27}>IAM</Crumb>
        <CrumbArrow><Chevron /></CrumbArrow>
        <Crumb $w={59}>Policies</Crumb>
        <CrumbArrow><Chevron /></CrumbArrow>
        <Current $ls={-0.29}>Create policy</Current>
        <CrumbTools><InfoIcon /><VRule /><HexIcon /></CrumbTools>
      </Crumbs>
    </>
  );
}

function Permissions() {
  return (
    <Card $h={368}>
      <CardHead>
        <Title $lh={36}><Txt $ls={-0.55}>Permissions defined in this policy</Txt><InfoLink $ls={-0.17}>Info</InfoLink></Title>
        <Button $w={87}>Edit</Button>
      </CardHead>
      <Desc $m="5px 0 11px"><Txt>Permissions defined in this policy document specify which actions are allowed or denied. To define permissions for an IAM identity (user, user group, or role), attach a policy to it</Txt></Desc>
      <SearchBox><Magnifier /><Hint $ls={0.18}>Search</Hint></SearchBox>
      <ListHead>
        <Allow $ls={-0.15}>Allow (1 of 450 services)</Allow>
        <ToggleRow><Toggle /><ToggleText $ls={0.03}>Show remaining 449 services</ToggleText></ToggleRow>
      </ListHead>
      <HeadRow>
        <Th $first><Txt $ls={-0.26}>Service</Txt><Caret up w={13} h={11} /></Th>
        <Th><Txt $ls={-0.37}>Access level</Txt><SortOutline /></Th>
        <Th><Txt $ls={-0.5}>Resource</Txt></Th>
        <Th><Txt $ls={-0.34}>Request condition</Txt></Th>
      </HeadRow>
      <BodyRow>
        <Td $first><ServiceLink $ls={0.3}>S3</ServiceLink></Td>
        <Td><Txt $ls={-0.05}>Limited: Permissions</Txt><Txt>management, Write</Txt></Td>
        <Td>
          <Txt $ls={-0.05}>ObjectPath| string like</Txt>
          <Txt $ls={-0.19}>|tweet_sentiment/*,</Txt>
          <Txt $ls={-0.18}>BucketName| string like</Txt>
          <Txt $ls={-0.28}>|myawsbucketpolelo</Txt>
        </Td>
        <Td><Txt $ls={-0.25}>None</Txt></Td>
      </BodyRow>
    </Card>
  );
}

const Optional = styled(Txt)`
  font-style: italic;
  margin-left: 7px;
`;

function Tags() {
  return (
    <Card $h={234}>
      <Title><Txt $ls={-0.27}>Add tags -</Txt><Optional $ls={-0.65}>optional</Optional><InfoLink $ml={10} $ls={-0.17}>Info</InfoLink></Title>
      <Desc $m="-1px 0 0"><Txt $ls={-0.03}>Tags are key-value pairs that you can add to AWS resources to help identify, organize, or search for resources.</Txt></Desc>
      <Desc $m="15px 0 26px" $c="#656871"><Txt $ls={-0.05}>No tags associated with the resource.</Txt></Desc>
      <Button $w={158}><Txt $ls={-0.1}>Add new tag</Txt></Button>
      <Note><Txt $ls={-0.1}>You can add up to 50 more tags.</Txt></Note>
    </Card>
  );
}

function TaskbarView() {
  return (
    <Taskbar>
      <Weather>
        <WeatherIcon><SunCloud /><Badge $bg="#ff98a2" $r={-3} $t={-9}>5</Badge></WeatherIcon>
        <TwoLine><Txt>27°C</Txt><Muted $ls={-0.15}>Partly sunny</Muted></TwoLine>
      </Weather>
      <StartBtn><i /><i /><i /><i /></StartBtn>
      <TaskSearch><Magnifier w={1.8} /><TaskHint $ls={-0.38}>Search</TaskHint><VillageIcon /></TaskSearch>
      {taskItems.map((t) => (
        <TaskSlot key={t.k}>
          <TaskTile $active={t.active}>
            {t.icon}
            {t.badge && <Badge $r={t.badge.length > 1 ? -1 : 2} $t={3} $w={t.badge.length > 1 ? 27 : 20}>{t.badge}</Badge>}
            {(t.active || t.running) && <Indicator $on={t.active} />}
          </TaskTile>
        </TaskSlot>
      ))}
      <Tray>
        <TrayItem $w={38}><svg width="14" height="9" viewBox="0 0 14 9" fill="none" stroke="#fff" strokeWidth="1.8"><path d="M1 8l6-6.500L13 8" /></svg></TrayItem>
        <TrayItem $w={40}>
          <svg width="20" height="16" viewBox="0 0 20 16" fill="none" stroke="#fff" strokeWidth="1.5"><rect x="0.8" y="0.8" width="18.4" height="14.4" rx="2.5" /><path d="M1 9.500h18M10 9.500V15" /></svg>
        </TrayItem>
        <TrayItem $w={57}><TwoLine $align="center"><Txt $ls={-0.3}>ENG</Txt><Txt $ls={-0.15}>INTL</Txt></TwoLine></TrayItem>
        <TrayItem $w={36}>
          <svg width="19" height="15" viewBox="0 0 19 15" fill="none" stroke="#fff" strokeWidth="1.6">
            <path d="M0.500 5.500a12.500 12.500 0 0 1 18 0" stroke="#666" /><path d="M3 8.200a9.300 9.300 0 0 1 13 0M5.800 11a5.500 5.500 0 0 1 7.400 0" /><circle cx="9.5" cy="13" r="1.3" fill="#fff" stroke="none" />
          </svg>
        </TrayItem>
        <TrayItem $w={24}>
          <svg width="20" height="18" viewBox="0 0 20 18" fill="none" stroke="#fff" strokeWidth="1.4" strokeLinejoin="round">
            <path d="M1 6.500h3l4.500-4v13l-4.500-4H1zM11 6a4 4 0 0 1 0 6M13.500 3.500a7.500 7.500 0 0 1 0 11M16 1.300a11 11 0 0 1 0 15.400" />
          </svg>
        </TrayItem>
        <TrayItem $w={35}>
          <svg width="20" height="17" viewBox="0 0 20 17" fill="none" stroke="#fff" strokeWidth="1.5">
            <path d="M10 4.500h6a1.500 1.500 0 0 1 1.500 1.500v7a1.500 1.500 0 0 1-1.500 1.500H8M18.500 8v3.500" />
            <path d="M1 12C-.5 7 3 4 7 .5c2.500 5 3.500 10-1 13.500-2 .5-4 .3-5-2z" fill="#fff" stroke="none" />
            <path d="M0 16l5.500-7" stroke="#1c1c1c" />
          </svg>
        </TrayItem>
        <TrayItem $w={15} />
        <TwoLine $align="right"><Txt $ls={-0.18}>16:04</Txt><Txt>2025/08/26</Txt></TwoLine>
      </Tray>
    </Taskbar>
  );
}

export default function App() {
  return (
    <Screen>
      <Global />
      <BrowserChrome />
      <Viewport>
        <Page>
          <ConsoleHeader />
          <Content>
            <Card $h={100} $mt={-93} />
            <Permissions />
            <Tags />
            <Actions>
              <Cancel $ls={-0.37}>Cancel</Cancel>
              <Button $w={125}><Txt $ls={-0.3}>Previous</Txt></Button>
              <Button $w={163} $primary><Txt $ls={-0.17}>Create policy</Txt></Button>
            </Actions>
          </Content>
          <Footer>
            <ShellIcon />
            <FootItem $ml={6} $ls={-0.06}>CloudShell</FootItem>
            <FootItem $ml={32} $ls={-0.4}>Feedback</FootItem>
            <Copyright $ls={-0.13}>© 2025, Amazon Web Services, Inc. or its affiliates.</Copyright>
            <FootItem $ls={-0.14}>Privacy</FootItem>
            <FootItem $ls={-0.43}>Terms</FootItem>
            <FootItem $ls={-0.34}>Cookie preferences</FootItem>
          </Footer>
        </Page>
        <Scrollbar>
          <Caret up w={12} h={11} c="#9f9f9f" />
          <Thumb />
          <Caret w={12} h={10} c="#9f9f9f" />
        </Scrollbar>
      </Viewport>
      <TaskbarView />
    </Screen>
  );
}
